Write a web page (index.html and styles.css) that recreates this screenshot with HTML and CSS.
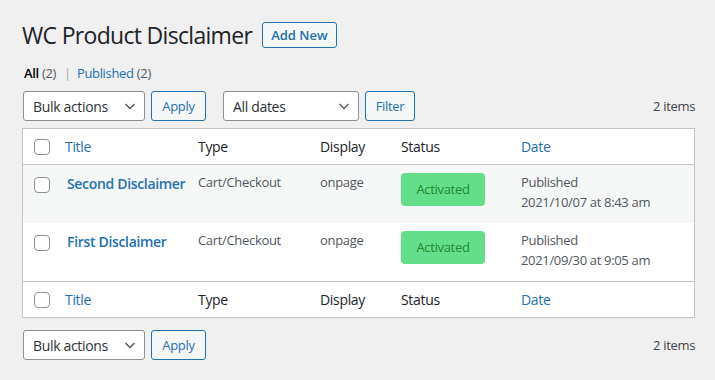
FILE: index.html
```html
<!DOCTYPE html>
<html lang="en">
<head>
  <meta charset="UTF-8" />
  <title>WC Product Disclaimer</title>
  <link rel="stylesheet" href="styles.css">
</head>
<body>
  <div class="wrap">

    <!-- Otsikko ja lisää uusi -->
    <div class="title-row">
      <h1 class="page-title">WC Product Disclaimer</h1>
      <a href="#" class="page-title-action">Add New</a>
    </div>

    <ul class="subsubsub">
      <li class="current">All <span class="count">(2)</span></li>
      <li class="sep">|</li>
      <li><a href="#">Published</a> <span class="count">(2)</span></li>
    </ul>

    <div class="tablenav top">
      <div class="actions">
        <div class="select bulk">
          <span>Bulk actions</span>
          <svg width="16" height="16" viewBox="0 0 16 16"><path d="M3.5 6 L8 10.5 L12.5 6" fill="none" stroke="#50575e" stroke-width="1.4"/></svg>
        </div>
        <button class="button">Apply</button>
      </div>
      <div class="actions">
        <div class="select dates">
          <span>All dates</span>
          <svg width="16" height="16" viewBox="0 0 16 16"><path d="M3.5 6 L8 10.5 L12.5 6" fill="none" stroke="#50575e" stroke-width="1.4"/></svg>
        </div>
        <button class="button filter">Filter</button>
      </div>
      <div class="num-items">2 items</div>
    </div>

    <table class="list-table">
      <colgroup>
        <col class="c-check">
        <col class="c-title">
        <col class="c-type">
        <col class="c-display">
        <col class="c-status">
        <col class="c-date">
      </colgroup>
      <thead>
        <tr>
          <th class="check-col"><span class="cb"></span></th>
          <th><a href="#">Title</a></th>
          <th>Type</th>
          <th>Display</th>
          <th>Status</th>
          <th><a href="#">Date</a></th>
        </tr>
      </thead>
      <tbody>
        <tr class="alt">
          <td class="check-col"><span class="cb"></span></td>
          <td class="title-cell"><a href="#">Second Disclaimer</a></td>
          <td>Cart/Checkout</td>
          <td>onpage</td>
          <td><span class="badge">Activated</span></td>
          <td>Published<br>2021/10/07 at 8:43 am</td>
        </tr>
        <tr>
          <td class="check-col"><span class="cb"></span></td>
          <td class="title-cell"><a href="#">First Disclaimer</a></td>
          <td>Cart/Checkout</td>
          <td>onpage</td>
          <td><span class="badge">Activated</span></td>
          <td>Published<br>2021/09/30 at 9:05 am</td>
        </tr>
      </tbody>
      <tfoot>
        <tr>
          <th class="check-col"><span class="cb"></span></th>
          <th><a href="#">Title</a></th>
          <th>Type</th>
          <th>Display</th>
          <th>Status</th>
          <th><a href="#">Date</a></th>
        </tr>
      </tfoot>
    </table>

    <div class="tablenav bottom">
      <div class="actions">
        <div class="select bulk">
          <span>Bulk actions</span>
          <svg width="16" height="16" viewBox="0 0 16 16"><path d="M3.5 6 L8 10.5 L12.5 6" fill="none" stroke="#50575e" stroke-width="1.4"/></svg>
        </div>
        <button class="button">Apply</button>
      </div>
      <div class="num-items">2 items</div>
    </div>

  </div>
</body>
</html>
```

FILE: styles.css
```css
body {
  margin: 0;
  background-color: #f0f0f1;
  font-family: 'Open Sans', 'Noto Sans', Arial, sans-serif;
  font-size: 13px;
  letter-spacing: -0.025em; /* kavennettu Segoe UI:n leveyteen */
  color: #3c434a;
}

a {
  color: #2271b1;
  text-decoration: none;
}

.wrap {
  padding: 20px 20px 0 22px;
}

/* Otsikkorivi */
.title-row {
  display: flex;
  align-items: center;
  gap: 10px;
  height: 30px;
}

.page-title {
  margin: 0;
  font-size: 23px;
  font-weight: 400;
  line-height: 30px;
  letter-spacing: -0.03em;
  color: #1d2327;
}

.page-title-action {
  display: inline-block;
  box-sizing: border-box;
  height: 26px;
  padding: 0 8px;
  border: 1px solid #2271b1;
  border-radius: 3px;
  background: #f6f7f7;
  font-size: 13px;
  font-weight: 600;
  line-height: 24px;
  letter-spacing: 0;
}

.subsubsub {
  list-style: none;
  margin: 13px 0 0 2px;
  padding: 0;
  display: flex;
  gap: 6px;
  line-height: 20px;
  color: #50575e;
}

.subsubsub .current {
  color: #000;
  font-weight: 600;
}

.subsubsub .count {
  font-weight: 400;
  color: #50575e;
}

.subsubsub .sep {
  color: #a7aaad;
  margin-left: 2px;
}

/* Työkalurivi */
.tablenav {
  display: flex;
  align-items: center;
  height: 30px;
}

.tablenav.top {
  margin: 8px 0 7px 1px;
}

.tablenav.bottom {
  margin: 12px 0 0 1px;
}

.actions {
  display: flex;
  gap: 6px;
  margin-right: 17px;
}

.select {
  box-sizing: border-box;
  height: 30px;
  display: flex;
  align-items: center;
  justify-content: space-between;
  padding: 0 6px 0 9px;
  border: 1px solid #8c8f94;
  border-radius: 3px;
  background: #fff;
  font-size: 14px;
  color: #2c3338;
}

.select svg {
  display: block;
}

.select.bulk {
  width: 122px;
}

.select.dates {
  width: 136px;
}

.button {
  box-sizing: border-box;
  height: 30px;
  padding: 0;
  border: 1px solid #2271b1;
  border-radius: 3px;
  background: #f6f7f7;
  color: #2271b1;
  font-family: inherit;
  font-size: 13px;
  letter-spacing: inherit;
  width: 55px;
}

.button.filter {
  width: 50px;
}

.num-items {
  margin-left: auto;
  color: #3c434a;
}

/* Taulukko */
.list-table {
  width: 673px;
  table-layout: fixed;
  border-collapse: separate;
  border-spacing: 0;
  border: 1px solid #c3c4c7;
  background: #fff;
}

.c-check { width: 32px; }
.c-title { width: 133px; }
.c-type { width: 122px; }
.c-display { width: 81px; }
.c-status { width: 120px; }
.c-date { width: 183px; }

.list-table th {
  height: 19px;
  padding: 8px 10px;
  text-align: left;
  font-size: 14px;
  font-weight: 400;
  line-height: 19px;
  color: #1d2327;
}

.list-table thead th {
  border-bottom: 1px solid #c3c4c7;
}

.list-table tfoot th {
  border-top: 1px solid #c3c4c7;
}

.list-table td {
  height: 42px;
  padding: 8px 10px;
  vertical-align: top;
  line-height: 19.5px;
  color: #50575e;
}

.list-table tr.alt td {
  background: #f6f7f7;
}

.list-table .check-col {
  padding: 0 0 0 11px;
  vertical-align: middle;
}

.list-table td.check-col {
  vertical-align: top;
  padding-top: 12px;
}

.cb {
  display: block;
  box-sizing: border-box;
  width: 16px;
  height: 16px;
  border: 1px solid #8c8f94;
  border-radius: 4px;
  background: #fff;
}

.title-cell {
  font-size: 14px;
  font-weight: 600;
  white-space: nowrap;
}

.title-cell a {
  line-height: 21px;
  padding-left: 2px;
}

.badge {
  display: flex;
  align-items: center;
  justify-content: center;
  width: 84px;
  height: 33px;
  border-radius: 4px;
  background: #64df89;
  color: #1b8a30;
  font-size: 13px;
}
```
